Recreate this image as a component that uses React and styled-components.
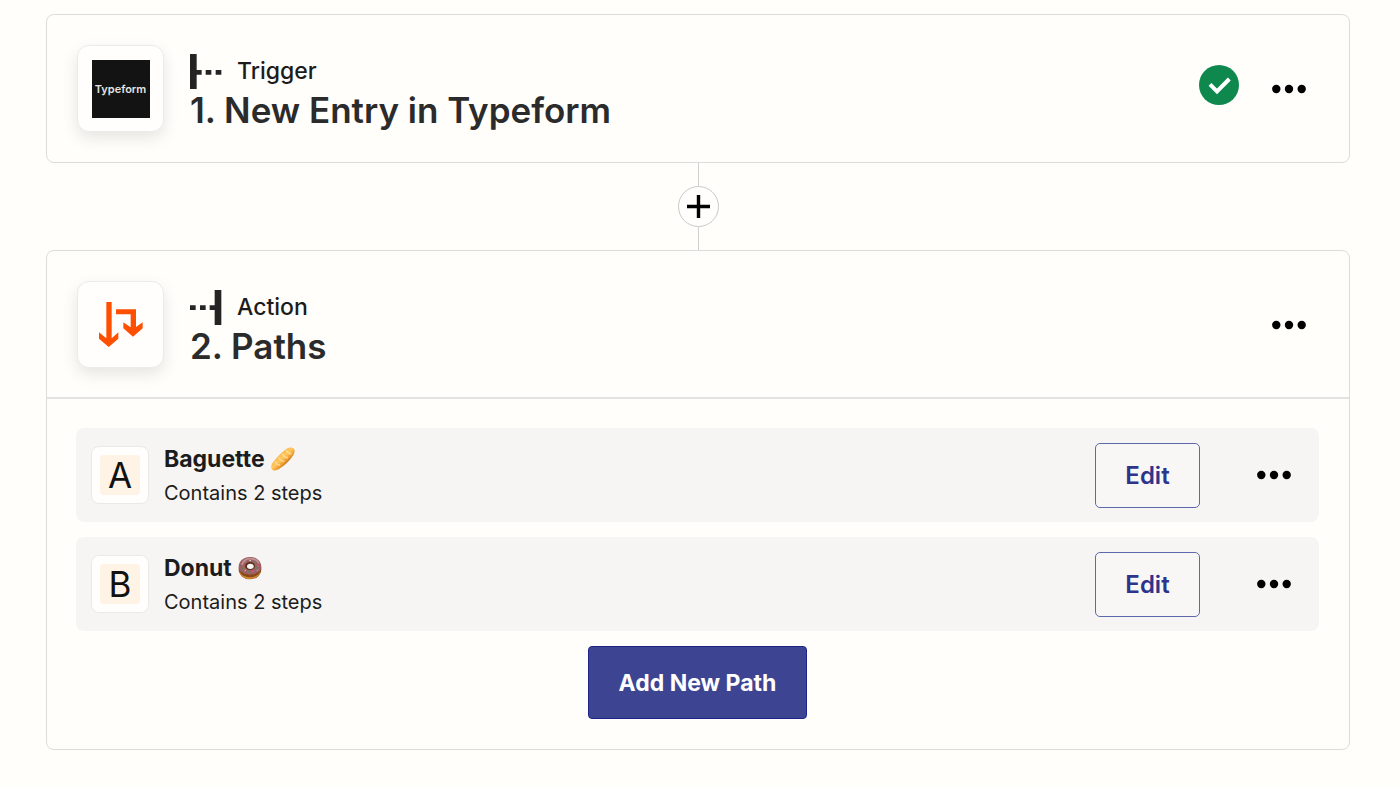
import React from "react";
import styled, { createGlobalStyle, css } from "styled-components";

const GlobalStyle = createGlobalStyle`
  *, *::before, *::after {
    box-sizing: border-box;
  }

  body {
    margin: 0;
    background: #fffefb;
    color: #202020;
    font-family: Inter, "Liberation Sans", sans-serif;
  }

  h2, h3, p, ul {
    margin: 0;
    padding: 0;
    font-weight: inherit;
  }
`;

const Page = styled.main`
  display: flex;
  flex-direction: column;
  padding: 14px 50px 36px 46px;
`;

const Card = styled.section`
  border: 1px solid #dcdcda;
  border-radius: 8px;
`;

const Header = styled.header`
  display: flex;
  align-items: center;
  padding: 30px;

  ${({ $divided }) =>
    $divided &&
    css`
      padding-bottom: 29px;
      border-bottom: 2px solid #e2e2e0;
    `};
`;

const AppIcon = styled.div`
  display: flex;
  flex-shrink: 0;
  align-items: center;
  justify-content: center;
  width: 87px;
  height: 87px;
  border: 1px solid #ecebe8;
  border-radius: 12px;
  background: #fffefd;
  box-shadow: 0 6px 16px rgba(0, 0, 0, 0.1);
`;

const TypeformLogo = styled.div`
  display: flex;
  align-items: center;
  justify-content: center;
  width: 58px;
  height: 58px;
  background: #131313;
  color: #e4e4e4;
  font-size: 11px;
  font-weight: 600;
`;

const Heading = styled.div`
  flex: 1;
  align-self: flex-start;
  padding: 9px 0 0 26px;
`;

const Kind = styled.p`
  display: flex;
  align-items: center;
  gap: 15px;
  font-size: 23px;
  font-weight: 500;
  line-height: 35px;
  color: #1c1c1c;
`;

const Title = styled.h2`
  font-size: 35px;
  font-weight: 600;
  line-height: 42px;
  color: #2b2b2b;
`;

const Status = styled.span`
  display: flex;
  margin: 0 20px 7px 0;
`;

const IconButton = styled.button`
  display: flex;
  padding: 13px;
  border: 0;
  background: none;
  color: #000;
  cursor: pointer;
`;

const Connector = styled.div`
  display: flex;
  flex-direction: column;
  align-items: center;
`;

const Line = styled.span`
  width: 1px;
  height: 23px;
  background: #cfcfcd;
`;

const AddStep = styled.button`
  display: flex;
  align-items: center;
  justify-content: center;
  width: 41px;
  height: 41px;
  padding: 0;
  border: 1px solid #c9c9c7;
  border-radius: 50%;
  background: #fffefd;
  color: #000;
  cursor: pointer;
`;

const Body = styled.div`
  display: flex;
  flex-direction: column;
  align-items: center;
  gap: 15px;
  padding: 29px 30px 30px 29px;
`;

const PathList = styled.ul`
  display: flex;
  flex-direction: column;
  gap: 15px;
  width: 100%;
  list-style: none;
`;

const PathRow = styled.li`
  display: flex;
  align-items: center;
  min-height: 94px;
  padding: 0 15px;
  border-radius: 8px;
  background: #f7f5f3;
`;

const LetterTile = styled.div`
  flex-shrink: 0;
  width: 58px;
  height: 58px;
  padding: 8px;
  border: 1px solid #ebe9e6;
  border-radius: 8px;
  background: #fffefd;
`;

const Letter = styled.div`
  display: flex;
  align-items: center;
  justify-content: center;
  height: 100%;
  border-radius: 4px;
  background: #fff3e6;
  color: #111;
  font-size: 35px;
`;

const PathText = styled.div`
  flex: 1;
  padding: 2px 0 0 15px;
  line-height: 34px;
`;

const PathName = styled.h3`
  display: flex;
  align-items: center;
  gap: 6px;
  font-size: 23px;
  font-weight: 700;
  color: #1c1c1c;
`;

const PathNote = styled.p`
  font-size: 20px;
  color: #1c1c1c;
`;

const EditButton = styled.button`
  width: 105px;
  height: 65px;
  margin-right: 44px;
  border: 1px solid #6068ad;
  border-radius: 5px;
  background: #f8f7f5;
  color: #2c348c;
  font-family: inherit;
  font-size: 24px;
  font-weight: 600;
  cursor: pointer;
`;

const AddPath = styled.button`
  height: 73px;
  padding: 0 30px;
  border: 1px solid #1d2389;
  border-radius: 4px;
  background: #3d4592;
  color: #fff;
  font-family: inherit;
  font-size: 23px;
  font-weight: 700;
  cursor: pointer;
`;

const TriggerIcon = () => (
  <svg width="32" height="35" viewBox="0 0 96 105" fill="#242424" aria-hidden="true">
    <path d="M0 0h20v105H0zM20 48h15v14H20zM47 48h17v14H47zM77 48h17v14H77z" />
  </svg>
);

const ActionIcon = () => (
  <svg width="32" height="35" viewBox="0 0 96 105" fill="#242424" aria-hidden="true">
    <path d="M74 0h20v105H74zM59 46h15v14H59zM30 46h17v14H30zM0 46h17v14H0z" />
  </svg>
);

const PathsIcon = () => (
  <svg width="44" height="45" viewBox="0 0 132 135" fill="#ff4f00" aria-hidden="true">
    <path d="M22 0h16v109l20-18v19l-29 25L0 110V91l22 18z" />
    <path d="M51 22h60v53l20-14v18l-29 25-29-25V61l22 15V37H51z" />
  </svg>
);

const CheckIcon = () => (
  <svg width="40" height="40" viewBox="0 0 120 120" role="img" aria-label="Complete">
    <circle cx="60" cy="60" r="60" fill="#0f884e" />
    <path d="M33 58l21 21 37-37" fill="none" stroke="#fff" strokeWidth="12" />
  </svg>
);

const DotsIcon = () => (
  <svg width="34" height="10" viewBox="0 0 34 10" fill="currentColor" aria-hidden="true">
    <circle cx="4.3" cy="5" r="4.2" />
    <circle cx="17" cy="5" r="4.2" />
    <circle cx="29.7" cy="5" r="4.2" />
  </svg>
);

const PlusIcon = () => (
  <svg width="23" height="23" viewBox="0 0 23 23" aria-hidden="true">
    <path d="M11.5 0v23M0 11.5h23" stroke="currentColor" strokeWidth="3.4" />
  </svg>
);

const Baguette = () => (
  <svg width="24" height="24" viewBox="0 0 72 72" role="img" aria-label="baguette">
    <defs>
      <linearGradient id="crust" x1="0.2" y1="0.2" x2="0.8" y2="0.8">
        <stop offset="0.1" stopColor="#f5b552" />
        <stop offset="0.45" stopColor="#ffc75e" />
        <stop offset="0.65" stopColor="#f0a033" />
        <stop offset="0.9" stopColor="#a9530f" />
      </linearGradient>
    </defs>
    <path
      d="M47 5c8-5 18-5 22 1 4 6 1 14-4 21-9 14-23 27-38 37-8 6-17 9-23 4-6-5-3-15 2-22C16 32 31 16 47 5z"
      fill="url(#crust)"
    />
    <path
      d="M47 12c3 5 7 8 13 8M35 22c3 6 8 10 14 10M24 33c3 6 8 10 14 10M13 45c3 6 8 9 13 9"
      fill="none"
      stroke="#ffe09a"
      strokeWidth="5"
      strokeLinecap="round"
      opacity="0.8"
    />
  </svg>
);

const Donut = () => (
  <svg width="24" height="24" viewBox="0 0 72 72" role="img" aria-label="donut">
    <ellipse cx="36" cy="40" rx="34" ry="30" fill="#8a4a17" />
    <path d="M4 44c7 26 57 26 64 0-4 32-60 34-64 0z" fill="#d48a35" />
    <path
      d="M36 3C16 3 2 16 2 33c0 8 4 14 9 15 6 1 7 7 14 6 6-1 8 4 15 2 6-2 9 1 14-4 5-4 16-5 16-19C70 16 56 3 36 3z"
      fill="#9c6063"
    />
    <path d="M12 25C17 12 29 8 38 8c11 0 20 5 24 13" fill="none" stroke="#c29191" strokeWidth="5" strokeLinecap="round" />
    <ellipse cx="36" cy="30" rx="15" ry="12" fill="#5b2f1c" />
    <ellipse cx="37" cy="31" rx="10" ry="8" fill="#f7f5f3" />
    <path d="M14 35l4 4M54 37l4-3M27 47l5 1M50 18l3 3" stroke="#3d9a62" strokeWidth="4" />
    <path d="M20 20l4-3M42 47l5-2M60 27l1 5" stroke="#df5b83" strokeWidth="4" />
    <path d="M34 13l5 1M20 44l4-2M57 44l3-3" stroke="#d9d2e2" strokeWidth="3" />
  </svg>
);

const paths = [
  { letter: "A", name: "Baguette", emoji: <Baguette />, note: "Contains 2 steps" },
  { letter: "B", name: "Donut", emoji: <Donut />, note: "Contains 2 steps" }
];

const StepHeader = ({ icon, kindIcon, kind, title, complete, divided }) => (
  <Header $divided={divided}>
    <AppIcon>{icon}</AppIcon>
    <Heading>
      <Kind>
        {kindIcon}
        {kind}
      </Kind>
      <Title>{title}</Title>
    </Heading>
    {complete && (
      <Status>
        <CheckIcon />
      </Status>
    )}
    <IconButton type="button" aria-label={`${title} options`}>
      <DotsIcon />
    </IconButton>
  </Header>
);

export default function App() {
  return (
    <>
      <GlobalStyle />
      <Page>
        <Card>
          <StepHeader
            icon={<TypeformLogo>Typeform</TypeformLogo>}
            kindIcon={<TriggerIcon />}
            kind="Trigger"
            title="1. New Entry in Typeform"
            complete
          />
        </Card>
        <Connector>
          <Line />
          <AddStep type="button" aria-label="Add step">
            <PlusIcon />
          </AddStep>
          <Line />
        </Connector>
        <Card>
          <StepHeader
            icon={<PathsIcon />}
            kindIcon={<ActionIcon />}
            kind="Action"
            title="2. Paths"
            divided
          />
          <Body>
            <PathList>
              {paths.map(path => (
                <PathRow key={path.letter}>
                  <LetterTile>
                    <Letter>{path.letter}</Letter>
                  </LetterTile>
                  <PathText>
                    <PathName>
                      {path.name}
                      {path.emoji}
                    </PathName>
                    <PathNote>{path.note}</PathNote>
                  </PathText>
                  <EditButton type="button">Edit</EditButton>
                  <IconButton type="button" aria-label={`${path.name} options`}>
                    <DotsIcon />
                  </IconButton>
                </PathRow>
              ))}
            </PathList>
            <AddPath type="button">Add New Path</AddPath>
          </Body>
        </Card>
      </Page>
    </>
  );
}
